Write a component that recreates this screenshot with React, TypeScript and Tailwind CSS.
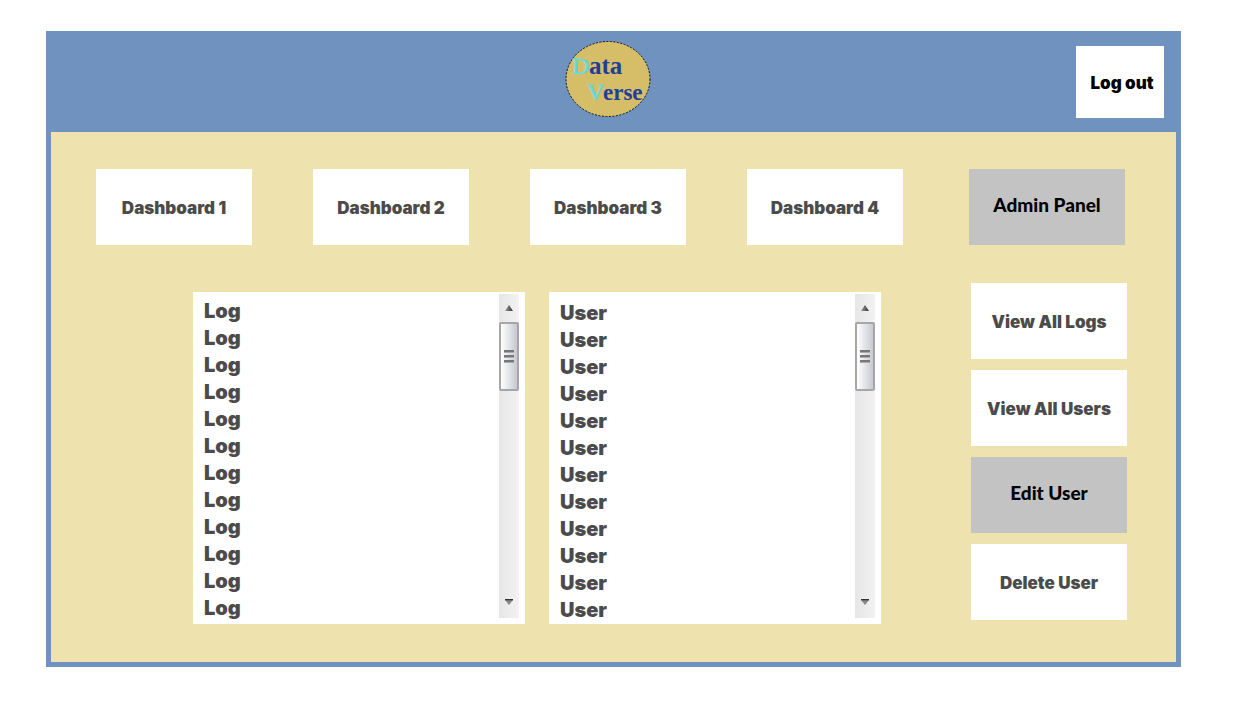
import React from 'react';

const dashboards = ['Dashboard 1', 'Dashboard 2', 'Dashboard 3', 'Dashboard 4'];
const rows = Array.from({ length: 12 }, (_, i) => i);

function PanelButton({ children, active = false }: { children: React.ReactNode; active?: boolean }) {
  const look = active
    ? "bg-[#c3c3c3] text-black font-black text-[19px] pb-1 font-['Lato',sans-serif]"
    : "bg-white text-[#4b4b4b] font-black text-[17px] pt-1 font-['Inter',sans-serif]";
  return (
    <button type="button" className={`h-[76px] w-[156px] shrink-0 whitespace-nowrap ${look}`}>
      {children}
    </button>
  );
}

function Logo() {
  return (
    <svg width="86" height="78" viewBox="0 0 86 78" role="img" aria-label="Data Verse" className="mt-1">
      <ellipse cx="43" cy="39" rx="42" ry="37.5" fill="#d6bd68" stroke="#111" strokeWidth="1" strokeDasharray="2 1.5" />
      <g fontFamily="'Liberation Serif', serif" fill="#1f3f99">
        <text x="7" y="34" fontSize="24" fill="#5edde2" stroke="#5edde2" strokeWidth="0.5">D</text>
        <text x="24" y="34" fontSize="25" fontWeight="bold">ata</text>
        <text x="22" y="60" fontSize="24" fill="#5edde2" stroke="#5edde2" strokeWidth="0.5">V</text>
        <text x="38" y="60" fontSize="23" fontWeight="bold">erse</text>
      </g>
    </svg>
  );
}

function ScrollTrack() {
  return (
    <div className="mt-[2px] mr-[6px] mb-[6px] flex w-5 flex-col items-stretch bg-linear-to-r from-[#e6e6e6] to-[#f2f2f2]">
      <button type="button" aria-label="Scroll up" className="flex h-7 items-center justify-center">
        <svg width="10" height="8" viewBox="0 0 10 8">
          <defs>
            <linearGradient id="up" x1="0" x2="1">
              <stop offset="0" stopColor="#999" />
              <stop offset="1" stopColor="#333" />
            </linearGradient>
          </defs>
          <path d="M5 1 9 7H1z" fill="url(#up)" />
        </svg>
      </button>
      <div className="flex h-[69px] flex-col items-center justify-center gap-[2px] rounded-xs border-2 border-[#a6a6a6] bg-linear-to-r from-white via-[#e3e4e8] to-[#c6c9d2]">
        <span className="h-[3px] w-[10px] border-t-2 border-[#777] bg-[#aaa]" />
        <span className="h-[3px] w-[10px] border-t-2 border-[#777] bg-[#aaa]" />
        <span className="h-[3px] w-[10px] border-t-2 border-[#777] bg-[#aaa]" />
      </div>
      <button type="button" aria-label="Scroll down" className="mt-auto flex h-8 items-center justify-center">
        <svg width="10" height="8" viewBox="0 0 10 8">
          <path d="M1 2h8L5 7z" fill="#888" />
          <path d="M1 1h8v1.3H1z" fill="#333" />
        </svg>
      </button>
    </div>
  );
}

function ListBox({ label, lower = false }: { label: string; lower?: boolean }) {
  return (
    <section aria-label={`${label} list`} className="flex min-h-[332px] flex-1 justify-between bg-white">
      <ul className={`pl-[11px] font-['Inter',sans-serif] text-[20px] leading-[27px] font-black text-[#4b4b4b] ${lower ? 'pt-2' : 'pt-[6px]'}`}>
        {rows.map((row) => (
          <li key={row}>{label}</li>
        ))}
      </ul>
      <ScrollTrack />
    </section>
  );
}

export default function App() {
  return (
    <div className="min-h-screen bg-white pt-[31px] pr-[68px] pb-8 pl-[46px]">
      <div className="border-[5px] border-[#6f92bf] bg-[#eee2ae]">
        <header className="grid h-24 grid-cols-[1fr_auto_1fr] items-start bg-[#6f92bf] pr-3">
          <span />
          <Logo />
          <button
            type="button"
            className="mt-[10px] h-[72px] w-[88px] justify-self-end bg-white pt-1 pl-1 font-['Inter',sans-serif] text-[17px] font-black whitespace-nowrap text-black"
          >
            Log out
          </button>
        </header>

        <main className="pt-[37px] pb-[38px]">
          <nav className="flex gap-[66px] pr-[51px] pl-[45px]">
            <div className="flex flex-1 justify-between">
              {dashboards.map((name) => (
                <PanelButton key={name}>{name}</PanelButton>
              ))}
            </div>
            <PanelButton active>Admin Panel</PanelButton>
          </nav>

          <div className="flex gap-[90px] pt-[38px] pr-[49px] pl-[142px]">
            <div className="flex flex-1 gap-6 pt-[9px]">
              <ListBox label="Log" />
              <ListBox label="User" lower />
            </div>
            <aside className="flex flex-col gap-[11px]">
              <PanelButton>View All Logs</PanelButton>
              <PanelButton>View All Users</PanelButton>
              <PanelButton active>Edit User</PanelButton>
              <PanelButton>Delete User</PanelButton>
            </aside>
          </div>
        </main>
      </div>
    </div>
  );
}
